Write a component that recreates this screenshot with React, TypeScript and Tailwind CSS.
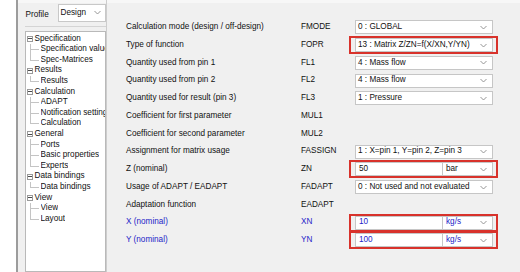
import React from 'react';

const font = { fontFamily: '"Liberation Sans", Arial, sans-serif' };

type Row = {
  label: string;
  code: string;
  kind: 'select' | 'none' | 'unit';
  value?: string;
  unit?: string;
  blue?: boolean;
  marked?: boolean;
};

const rows: Row[] = [
  { label: 'Calculation mode (design / off-design)', code: 'FMODE', kind: 'select', value: '0 : GLOBAL' },
  { label: 'Type of function', code: 'FOPR', kind: 'select', value: '13 : Matrix Z/ZN=f(X/XN,Y/YN)', marked: true },
  { label: 'Quantity used from pin 1', code: 'FL1', kind: 'select', value: '4 : Mass flow' },
  { label: 'Quantity used from pin 2', code: 'FL2', kind: 'select', value: '4 : Mass flow' },
  { label: 'Quantity used for result (pin 3)', code: 'FL3', kind: 'select', value: '1 : Pressure' },
  { label: 'Coefficient for first parameter', code: 'MUL1', kind: 'none' },
  { label: 'Coefficient for second parameter', code: 'MUL2', kind: 'none' },
  { label: 'Assignment for matrix usage', code: 'FASSIGN', kind: 'select', value: '1 : X=pin 1, Y=pin 2, Z=pin 3' },
  { label: 'Z (nominal)', code: 'ZN', kind: 'unit', value: '50', unit: 'bar', marked: true },
  { label: 'Usage of ADAPT / EADAPT', code: 'FADAPT', kind: 'select', value: '0 : Not used and not evaluated' },
  { label: 'Adaptation function', code: 'EADAPT', kind: 'none' },
  { label: 'X (nominal)', code: 'XN', kind: 'unit', value: '10', unit: 'kg/s', blue: true, marked: true },
  { label: 'Y (nominal)', code: 'YN', kind: 'unit', value: '100', unit: 'kg/s', blue: true, marked: true },
];

const tree: { title: string; children: string[] }[] = [
  { title: 'Specification', children: ['Specification values', 'Spec-Matrices'] },
  { title: 'Results', children: ['Results'] },
  { title: 'Calculation', children: ['ADAPT', 'Notification settings', 'Calculation'] },
  { title: 'General', children: ['Ports', 'Basic properties', 'Experts'] },
  { title: 'Data bindings', children: ['Data bindings'] },
  { title: 'View', children: ['View', 'Layout'] },
];

function Chevron() {
  return (
    <svg width="7" height="5" viewBox="0 0 7 5" className="shrink-0">
      <polyline points="0.5,1 3.5,4 6.5,1" fill="none" stroke="#8a8a8a" strokeWidth="0.9" />
    </svg>
  );
}

function Field({ row }: { row: Row }) {
  const color = row.blue ? 'text-[#2424c8]' : 'text-[#111]';
  if (row.kind === 'none') return null;
  return (
    <div className="relative w-[138px] h-[14px]">
      {row.kind === 'select' ? (
        <div className={`flex h-full items-center justify-between border border-[#c6c6c6] bg-white pl-[2px] pr-[5px] ${color}`}>
          <span className="whitespace-nowrap">{row.value}</span>
          <Chevron />
        </div>
      ) : (
        <div className="flex h-full">
          <div className={`flex w-[88px] items-center border border-[#c6c6c6] bg-white pl-[3px] ${color}`}>
            {row.value}
          </div>
          <div className={`flex flex-1 items-center justify-between border border-l-0 border-[#c6c6c6] bg-white pl-[3px] pr-[5px] ${color}`}>
            <span>{row.unit}</span>
            <Chevron />
          </div>
        </div>
      )}
      {row.marked && (
        <span className="pointer-events-none absolute -left-[6px] -right-[5px] -top-[2px] -bottom-[2px] border-2 border-[#d8322b]" />
      )}
    </div>
  );
}

export default function App() {
  return (
    <div className="flex w-[520px] h-[272px] overflow-hidden bg-white text-[8.2px] text-[#111]" style={font}>
      <div className="w-[16px] bg-white" />
      <div className="w-[1.5px] bg-[#9c9c9c]" />
      {/* side panel */}
      <div className="flex w-[88.5px] flex-col bg-[#f0f0f0]">
        <div className="h-[3px] bg-[#f7f7f7]" />
        <div className="flex items-center pl-[8px] pt-[1px]">
          <span className="mt-[4px] w-[32px]">Profile</span>
          <div className="flex h-[18px] w-[48px] items-start justify-between border border-[#c8c8c8] bg-white pl-[2px] pr-[4px] pt-[2px]">
            <span>Design</span>
            <span className="mt-[3px]"><Chevron /></span>
          </div>
        </div>
        <div className="ml-[7px] mt-[4px] h-[1px] bg-[#d4d4d4]" />
        <div className="ml-[7px] mt-[4px] flex-1 border border-[#b9b9b9] bg-white pt-[1.5px]">
          {tree.map((g) => (
            <div key={g.title}>
              <div className="flex h-[10.6px] items-center">
                <span className="ml-[1px] mr-[2px] flex h-[6px] w-[6px] items-center justify-center border border-[#9a9a9a]">
                  <span className="h-[1px] w-[4px] bg-[#4a4a4a]" />
                </span>
                <span className="whitespace-nowrap">{g.title}</span>
              </div>
              {g.children.map((c, i) => (
                <div key={c + i} className="relative flex h-[10.6px] items-center pl-[15px]">
                  <span
                    className={`absolute left-[4px] top-0 w-[1px] bg-[#c4c4c4] ${i === g.children.length - 1 ? 'h-[5.5px]' : 'h-full'}`}
                  />
                  <span className="absolute left-[4px] top-[5px] h-[1px] w-[9px] bg-[#c4c4c4]" />
                  <span className="whitespace-nowrap overflow-hidden">{c}</span>
                </div>
              ))}
            </div>
          ))}
        </div>
      </div>
      <div className="w-[1px] bg-[#cdcdcd]" />
      {/* main form */}
      <div className="flex flex-1 flex-col bg-[#f0f0f0]">
        <div className="h-[3px] bg-[#f7f7f7]" />
        <div className="flex flex-col pl-[19px] pt-[15.5px]">
          {rows.map((r) => (
            <div key={r.code} className="flex h-[17.75px] items-center">
              <span className={`w-[175px] whitespace-nowrap ${r.blue ? 'text-[#2424c8]' : ''}`}>{r.label}</span>
              <span className={`w-[54px] ${r.blue ? 'text-[#2424c8]' : ''}`}>{r.code}</span>
              <Field row={r} />
            </div>
          ))}
        </div>
      </div>
    </div>
  );
}
